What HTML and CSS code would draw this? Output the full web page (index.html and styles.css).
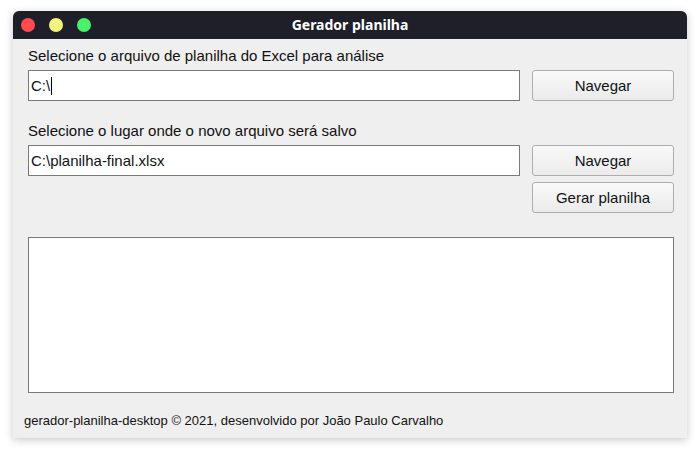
FILE: index.html
```html
<!DOCTYPE html>
<html lang="pt">
<head>
<meta charset="utf-8">
<title>Gerador planilha</title>
<link rel="stylesheet" href="styles.css">
</head>
<body>
<div class="window">
  <div class="titlebar">
    <div class="lights">
      <span class="light red"></span>
      <span class="light yellow"></span>
      <span class="light green"></span>
    </div>
    <div class="title">Gerador planilha</div>
  </div>
  <div class="content">
    <label class="label">Selecione o arquivo de planilha do Excel para análise</label>
    <div class="row">
      <div class="input">C:\<span class="caret"></span></div>
      <div class="buttons">
        <button class="btn">Navegar</button>
      </div>
    </div>
    <label class="label second">Selecione o lugar onde o novo arquivo será salvo</label>
    <div class="row">
      <div class="input">C:\planilha-final.xlsx</div>
      <div class="buttons">
        <button class="btn">Navegar</button>
        <button class="btn">Gerar planilha</button>
      </div>
    </div>
    <div class="log"></div>
  </div>
  <div class="footer">gerador-planilha-desktop © 2021, desenvolvido por João Paulo Carvalho</div>
</div>
</body>
</html>
```
FILE: styles.css
```css
html, body {
  margin: 0;
  padding: 0;
  background: #ffffff;
}
body {
  width: 700px;
  height: 454px;
  overflow: hidden;
}
.window {
  margin: 11px 0 0 13px;
  width: 674px;
  height: 427px;
  background: #efefef;
  border-radius: 6px 6px 0 0;
  box-shadow: 0 2px 8px rgba(0,0,0,0.22);
  display: flex;
  flex-direction: column;
  font-family: "Liberation Sans", Arial, sans-serif;
  color: #111;
}
.titlebar {
  height: 28px;
  background: #1e1f29;
  border-radius: 6px 6px 0 0;
  display: flex;
  align-items: center;
  position: relative;
}
.lights {
  display: flex;
  gap: 14px;
  padding-left: 8px;
}
.light {
  width: 14px;
  height: 14px;
  border-radius: 50%;
  display: block;
}
.red { background: #ff4a4f; }
.yellow { background: #f0f47c; }
.green { background: #4af26a; }
.title {
  position: absolute;
  left: 0;
  right: 0;
  top: 0;
  line-height: 28px;
  text-align: center;
  color: #ffffff;
  font-family: "Noto Sans", "Open Sans", sans-serif;
  font-weight: 700;
  font-size: 14px;
}
.content {
  padding: 8px 13px 0 15px;
  display: flex;
  flex-direction: column;
  flex: 1;
}
.label {
  display: block;
  font-size: 15px;
  line-height: 18px;
  margin-bottom: 5px;
}
.label.second {
  margin-top: 21px;
}
.row {
  display: flex;
  gap: 12px;
  align-items: flex-start;
}
.input {
  flex: 1;
  height: 31px;
  box-sizing: border-box;
  border: 1px solid #7a7a7a;
  background: #ffffff;
  font-size: 15px;
  line-height: 29px;
  padding-left: 2px;
  display: flex;
  align-items: center;
}
.caret {
  display: inline-block;
  width: 1px;
  height: 18px;
  background: #000;
  margin-left: 1px;
}
.buttons {
  width: 142px;
  display: flex;
  flex-direction: column;
  gap: 6px;
}
.btn {
  height: 31px;
  box-sizing: border-box;
  border: 1px solid #adadad;
  border-radius: 3px;
  background: linear-gradient(#f9f9f9, #ebebeb);
  font-family: "Liberation Sans", Arial, sans-serif;
  font-size: 15px;
  color: #111;
  padding: 0;
}
.log {
  margin-top: 24px;
  height: 156px;
  box-sizing: border-box;
  border: 1px solid #7a7a7a;
  background: #ffffff;
}
.footer {
  padding: 0 0 0 11px;
  height: 45px;
  line-height: 56px;
  font-size: 13px;
  color: #111;
}
```
